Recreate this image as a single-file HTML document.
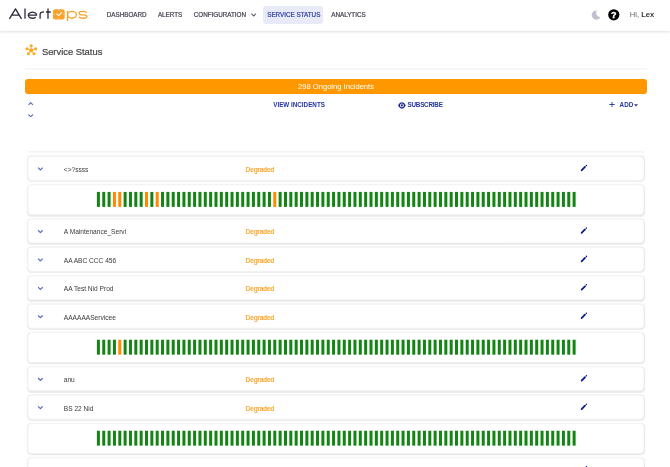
<!DOCTYPE html>
<html><head><meta charset="utf-8">
<style>
*{box-sizing:border-box;margin:0;padding:0}
html,body{width:670px;height:467px;overflow:hidden;background:#fff;font-family:"Liberation Sans",sans-serif;position:relative}
.hdr{position:absolute;left:0;top:0;width:670px;height:31px;background:#fff;box-shadow:0 0.5px 2.5px rgba(0,0,0,.13);z-index:2}
.abs{position:absolute;white-space:nowrap}
.nav{font-size:6.3px;color:#404050;top:12px;line-height:6px;-webkit-text-stroke:0.2px currentColor}
.pill{position:absolute;left:263.1px;top:6.3px;width:60.4px;height:17.5px;background:#e8eaf8;border-radius:3px}
.title{font-size:9.4px;color:#444;-webkit-text-stroke:0.2px #444;left:41.9px;top:46.5px;line-height:10px}
.divider{position:absolute;left:0;top:0;transform:translate(25px,68.4px);width:622px;height:1.1px;background:#eeeeee}
.obar{position:absolute;left:25px;top:79px;width:622px;height:14.7px;background:#ff9800;border-radius:3px;color:#fff;font-size:7.6px;text-align:center;line-height:15px}
.act{font-size:6.3px;font-weight:bold;color:#2435a0;top:102px;line-height:6px}
.tline{position:absolute;left:0;top:0;transform:translate(28px,151.4px);width:615.5px;height:1px;background:#ececec}
.card{position:absolute;left:0;top:0;width:616.8px;border:1px solid #f3f3f3;border-radius:4.5px;box-shadow:0 0 1.6px rgba(0,0,0,.05),0 0.8px 1px rgba(0,0,0,.07);background:#fff}
.card i{position:absolute;top:6.6px;width:3px;height:15.3px}
.chev{position:absolute;left:9.2px;top:10.4px}
.name{position:absolute;left:35.4px;top:8.5px;font-size:6.6px;color:#3a3a3a;line-height:7px;white-space:nowrap}
.deg{position:absolute;left:217.2px;top:8.5px;font-size:6.5px;color:#f9a11f;-webkit-text-stroke:0.2px #f9a11f;line-height:7px}
.pen{position:absolute;left:551.9px;top:7.2px}
.wrap{position:absolute;left:0;top:0;width:670px;height:467px;will-change:transform}
</style></head><body><div class="wrap">
<div class="hdr">
  <svg class="abs" style="left:0;top:0" width="100" height="31" viewBox="0 0 100 31">
    <g fill="none" stroke="#2a2a3a" stroke-width="1.3" stroke-linejoin="round">
      <path d="M9.4 18.8 L15.5 8.9 L21.5 18.8 M12.2 15.1 H18.8"/>
      <path d="M25 8.4 V18.8"/>
      <path d="M28.25 15.2 H36.65 A4.2 3.05 0 1 0 35.67 17.16"/>
      <path d="M40.1 18.8 V14.6 Q40.1 11.95 44.1 11.95"/>
      <path d="M48 8.6 V18.8 M46 12 H50.8"/>
    </g>
    <rect x="52.9" y="9.3" width="11.8" height="10.1" rx="2.5" fill="#f8a22b"/>
    <g stroke="#fff" stroke-width="0.7" opacity="0.75"><path d="M58.8 9.7 V10.7 M58.8 18 V19 M53.3 14.35 H54.3 M63.3 14.35 H64.3"/></g>
    <path d="M56.5 13.8 L58.7 15.6 L62.1 12.2" fill="none" stroke="#fff" stroke-width="1.1"/>
    <g fill="none" stroke="#f8a22b" stroke-width="1.3">
      <path d="M67.55 11 V21.1"/>
      <ellipse cx="71.95" cy="14.85" rx="4.4" ry="3.4"/>
      <path d="M86.5 12.7 C86 11.7 84.6 11.45 83 11.45 C80.6 11.45 79.1 11.9 79.1 13.2 C79.1 14.5 80.6 14.85 83 14.85 C85.4 14.85 86.9 15.2 86.9 16.5 C86.9 17.8 85.4 18.25 83 18.25 C81 18.25 79.5 18 78.9 16.9"/>
    </g>
  </svg>
  <span class="abs nav" style="left:106.7px">DASHBOARD</span>
  <span class="abs nav" style="left:157.9px">ALERTS</span>
  <span class="abs nav" style="left:193.7px">CONFIGURATION</span>
  <svg class="abs" style="left:250.5px;top:12.8px" width="5.5" height="4" viewBox="0 0 5.5 4"><path d="M0.5 0.6 L2.75 3 L5 0.6" fill="none" stroke="#505060" stroke-width="1.05"/></svg>
  <div class="pill"></div>
  <span class="abs nav" style="left:267.2px;color:#303f9f">SERVICE STATUS</span>
  <span class="abs nav" style="left:331.2px">ANALYTICS</span>
  <svg class="abs" style="left:591px;top:9.5px" width="10.5" height="10.5" viewBox="0 0 10.5 10.5"><defs><mask id="mm"><rect width="11" height="11" fill="#fff"/><circle cx="9.3" cy="2.9" r="4.2" fill="#000"/></mask></defs><circle cx="5.3" cy="5.05" r="4.6" fill="#c0c0d2" mask="url(#mm)"/></svg>
  <svg class="abs" style="left:608.3px;top:9.3px" width="11.6" height="11.6" viewBox="0 0 12 12"><circle cx="6" cy="6" r="5.8" fill="#000"/><text x="6" y="9.5" text-anchor="middle" font-family="Liberation Sans" font-weight="bold" font-size="9.4" fill="#fff" stroke="#fff" stroke-width="0.35">?</text></svg>
  <span class="abs" style="left:629.8px;top:10.6px;font-size:7.6px;color:#666;line-height:8px">Hi, <b style="color:#3a3a3a">Lex</b></span>
</div>
<svg class="abs" style="left:24.5px;top:44px" width="13" height="13" viewBox="0 0 13 13">
  <g stroke="#ffa51e" stroke-width="0.9" fill="#ffa51e">
  <path d="M6.2 6.4 L6.2 1.6 M6.2 6.4 L2 4.7 M6.2 6.4 L10.7 4.7 M6.2 6.4 L3.3 9.8 M6.2 6.4 L9.1 9.8"/>
  <circle cx="6.2" cy="1.7" r="1.5" stroke="none"/><circle cx="2" cy="4.75" r="1.5" stroke="none"/><circle cx="10.7" cy="4.75" r="1.5" stroke="none"/><circle cx="3.4" cy="9.8" r="1.5" stroke="none"/><circle cx="9.0" cy="9.8" r="1.5" stroke="none"/><circle cx="6.2" cy="6.4" r="2.0" stroke="none"/>
  </g>
</svg>
<span class="abs title">Service Status</span>
<div class="divider"></div>
<div class="obar">298 Ongoing Incidents</div>
<svg class="abs" style="left:28.3px;top:101.8px" width="5.4" height="3.4" viewBox="0 0 5.4 3.4"><path d="M0.5 2.9 L2.7 0.6 L4.9 2.9" fill="none" stroke="#5c6bc0" stroke-width="1.1"/></svg>
<svg class="abs" style="left:28.3px;top:113.6px" width="5.4" height="3.4" viewBox="0 0 5.4 3.4"><path d="M0.5 0.5 L2.7 2.8 L4.9 0.5" fill="none" stroke="#5c6bc0" stroke-width="1.1"/></svg>
<span class="abs act" style="left:273.2px">VIEW INCIDENTS</span>
<svg class="abs" style="left:397.5px;top:101.6px" width="8" height="7" viewBox="0 0 8 7"><path d="M0.1 3.4 C1.5 0.9 2.7 0.3 3.9 0.3 C5.1 0.3 6.3 0.9 7.7 3.4 C6.3 5.9 5.1 6.5 3.9 6.5 C2.7 6.5 1.5 5.9 0.1 3.4 Z" fill="#1a2590"/><circle cx="3.9" cy="3.4" r="1.9" fill="#fff"/><circle cx="3.9" cy="3.4" r="1.05" fill="#1a2590"/></svg>
<span class="abs act" style="left:407.5px;letter-spacing:-0.22px">SUBSCRIBE</span>
<svg class="abs" style="left:609px;top:102px" width="6" height="5" viewBox="0 0 6 5"><path d="M0.3 2.5 H5.7 M3 0 V5" stroke="#283593" stroke-width="0.9"/></svg>
<span class="abs act" style="left:619.6px">ADD</span>
<svg class="abs" style="left:634px;top:103.5px" width="4" height="3" viewBox="0 0 4 3"><path d="M0 0.3 H4 L2 2.5 Z" fill="#283593"/></svg>
<div class="tline"></div>
<div class="card" style="transform:translate(27.4px,155.90px);height:25.40px">
<svg class="chev" width="6" height="4" viewBox="0 0 6 4"><path d="M0.7 0.8 L3 3.1 L5.3 0.8" fill="none" stroke="#5c6bc0" stroke-width="1.2"/></svg>
<span class="name">&lt;&gt;?ssss</span><span class="deg">Degraded</span>
<svg class="pen" width="8" height="8" viewBox="0 0 8 8"><path d="M1.2 6.4 L4.6 3" stroke="#0d1b8e" stroke-width="1.8" stroke-linecap="round"/><circle cx="6" cy="1.55" r="0.8" fill="#0d1b8e"/></svg>
</div>
<div class="card" style="transform:translate(27.4px,184.30px);height:31.17px"></div>
<svg class="abs" style="left:0;top:0;transform:translateY(191.70px)" width="670" height="16" viewBox="0 0 670 16"><rect x="96.90" y="0" width="3" height="15.2" fill="#148414"/><rect x="102.25" y="0" width="3" height="15.2" fill="#148414"/><rect x="107.59" y="0" width="3" height="15.2" fill="#148414"/><rect x="112.94" y="0" width="3" height="15.2" fill="#ff8a00"/><rect x="118.28" y="0" width="3" height="15.2" fill="#ff8a00"/><rect x="123.62" y="0" width="3" height="15.2" fill="#148414"/><rect x="128.97" y="0" width="3" height="15.2" fill="#148414"/><rect x="134.31" y="0" width="3" height="15.2" fill="#148414"/><rect x="139.66" y="0" width="3" height="15.2" fill="#148414"/><rect x="145.00" y="0" width="3" height="15.2" fill="#ff8a00"/><rect x="150.35" y="0" width="3" height="15.2" fill="#148414"/><rect x="155.69" y="0" width="3" height="15.2" fill="#ff8a00"/><rect x="161.04" y="0" width="3" height="15.2" fill="#148414"/><rect x="166.38" y="0" width="3" height="15.2" fill="#148414"/><rect x="171.73" y="0" width="3" height="15.2" fill="#148414"/><rect x="177.07" y="0" width="3" height="15.2" fill="#148414"/><rect x="182.42" y="0" width="3" height="15.2" fill="#148414"/><rect x="187.76" y="0" width="3" height="15.2" fill="#148414"/><rect x="193.11" y="0" width="3" height="15.2" fill="#148414"/><rect x="198.45" y="0" width="3" height="15.2" fill="#148414"/><rect x="203.80" y="0" width="3" height="15.2" fill="#148414"/><rect x="209.14" y="0" width="3" height="15.2" fill="#148414"/><rect x="214.49" y="0" width="3" height="15.2" fill="#148414"/><rect x="219.83" y="0" width="3" height="15.2" fill="#148414"/><rect x="225.18" y="0" width="3" height="15.2" fill="#148414"/><rect x="230.53" y="0" width="3" height="15.2" fill="#148414"/><rect x="235.87" y="0" width="3" height="15.2" fill="#148414"/><rect x="241.22" y="0" width="3" height="15.2" fill="#148414"/><rect x="246.56" y="0" width="3" height="15.2" fill="#148414"/><rect x="251.91" y="0" width="3" height="15.2" fill="#148414"/><rect x="257.25" y="0" width="3" height="15.2" fill="#148414"/><rect x="262.60" y="0" width="3" height="15.2" fill="#148414"/><rect x="267.94" y="0" width="3" height="15.2" fill="#148414"/><rect x="273.28" y="0" width="3" height="15.2" fill="#ff8a00"/><rect x="278.63" y="0" width="3" height="15.2" fill="#148414"/><rect x="283.98" y="0" width="3" height="15.2" fill="#148414"/><rect x="289.32" y="0" width="3" height="15.2" fill="#148414"/><rect x="294.66" y="0" width="3" height="15.2" fill="#148414"/><rect x="300.01" y="0" width="3" height="15.2" fill="#148414"/><rect x="305.36" y="0" width="3" height="15.2" fill="#148414"/><rect x="310.70" y="0" width="3" height="15.2" fill="#148414"/><rect x="316.04" y="0" width="3" height="15.2" fill="#148414"/><rect x="321.39" y="0" width="3" height="15.2" fill="#148414"/><rect x="326.74" y="0" width="3" height="15.2" fill="#148414"/><rect x="332.08" y="0" width="3" height="15.2" fill="#148414"/><rect x="337.42" y="0" width="3" height="15.2" fill="#148414"/><rect x="342.77" y="0" width="3" height="15.2" fill="#148414"/><rect x="348.12" y="0" width="3" height="15.2" fill="#148414"/><rect x="353.46" y="0" width="3" height="15.2" fill="#148414"/><rect x="358.80" y="0" width="3" height="15.2" fill="#148414"/><rect x="364.15" y="0" width="3" height="15.2" fill="#148414"/><rect x="369.50" y="0" width="3" height="15.2" fill="#148414"/><rect x="374.84" y="0" width="3" height="15.2" fill="#148414"/><rect x="380.18" y="0" width="3" height="15.2" fill="#148414"/><rect x="385.53" y="0" width="3" height="15.2" fill="#148414"/><rect x="390.88" y="0" width="3" height="15.2" fill="#148414"/><rect x="396.22" y="0" width="3" height="15.2" fill="#148414"/><rect x="401.56" y="0" width="3" height="15.2" fill="#148414"/><rect x="406.91" y="0" width="3" height="15.2" fill="#148414"/><rect x="412.25" y="0" width="3" height="15.2" fill="#148414"/><rect x="417.60" y="0" width="3" height="15.2" fill="#148414"/><rect x="422.94" y="0" width="3" height="15.2" fill="#148414"/><rect x="428.29" y="0" width="3" height="15.2" fill="#148414"/><rect x="433.63" y="0" width="3" height="15.2" fill="#148414"/><rect x="438.98" y="0" width="3" height="15.2" fill="#148414"/><rect x="444.33" y="0" width="3" height="15.2" fill="#148414"/><rect x="449.67" y="0" width="3" height="15.2" fill="#148414"/><rect x="455.01" y="0" width="3" height="15.2" fill="#148414"/><rect x="460.36" y="0" width="3" height="15.2" fill="#148414"/><rect x="465.71" y="0" width="3" height="15.2" fill="#148414"/><rect x="471.05" y="0" width="3" height="15.2" fill="#148414"/><rect x="476.39" y="0" width="3" height="15.2" fill="#148414"/><rect x="481.74" y="0" width="3" height="15.2" fill="#148414"/><rect x="487.09" y="0" width="3" height="15.2" fill="#148414"/><rect x="492.43" y="0" width="3" height="15.2" fill="#148414"/><rect x="497.77" y="0" width="3" height="15.2" fill="#148414"/><rect x="503.12" y="0" width="3" height="15.2" fill="#148414"/><rect x="508.47" y="0" width="3" height="15.2" fill="#148414"/><rect x="513.81" y="0" width="3" height="15.2" fill="#148414"/><rect x="519.15" y="0" width="3" height="15.2" fill="#148414"/><rect x="524.50" y="0" width="3" height="15.2" fill="#148414"/><rect x="529.85" y="0" width="3" height="15.2" fill="#148414"/><rect x="535.19" y="0" width="3" height="15.2" fill="#148414"/><rect x="540.53" y="0" width="3" height="15.2" fill="#148414"/><rect x="545.88" y="0" width="3" height="15.2" fill="#148414"/><rect x="551.23" y="0" width="3" height="15.2" fill="#148414"/><rect x="556.57" y="0" width="3" height="15.2" fill="#148414"/><rect x="561.91" y="0" width="3" height="15.2" fill="#148414"/><rect x="567.26" y="0" width="3" height="15.2" fill="#148414"/><rect x="572.61" y="0" width="3" height="15.2" fill="#148414"/></svg>
<div class="card" style="transform:translate(27.4px,218.47px);height:25.40px">
<svg class="chev" width="6" height="4" viewBox="0 0 6 4"><path d="M0.7 0.8 L3 3.1 L5.3 0.8" fill="none" stroke="#5c6bc0" stroke-width="1.2"/></svg>
<span class="name">A Maintenance_Servi</span><span class="deg">Degraded</span>
<svg class="pen" width="8" height="8" viewBox="0 0 8 8"><path d="M1.2 6.4 L4.6 3" stroke="#0d1b8e" stroke-width="1.8" stroke-linecap="round"/><circle cx="6" cy="1.55" r="0.8" fill="#0d1b8e"/></svg>
</div>
<div class="card" style="transform:translate(27.4px,246.87px);height:25.40px">
<svg class="chev" width="6" height="4" viewBox="0 0 6 4"><path d="M0.7 0.8 L3 3.1 L5.3 0.8" fill="none" stroke="#5c6bc0" stroke-width="1.2"/></svg>
<span class="name">AA ABC CCC 456</span><span class="deg">Degraded</span>
<svg class="pen" width="8" height="8" viewBox="0 0 8 8"><path d="M1.2 6.4 L4.6 3" stroke="#0d1b8e" stroke-width="1.8" stroke-linecap="round"/><circle cx="6" cy="1.55" r="0.8" fill="#0d1b8e"/></svg>
</div>
<div class="card" style="transform:translate(27.4px,275.27px);height:25.40px">
<svg class="chev" width="6" height="4" viewBox="0 0 6 4"><path d="M0.7 0.8 L3 3.1 L5.3 0.8" fill="none" stroke="#5c6bc0" stroke-width="1.2"/></svg>
<span class="name">AA Test Nid Prod</span><span class="deg">Degraded</span>
<svg class="pen" width="8" height="8" viewBox="0 0 8 8"><path d="M1.2 6.4 L4.6 3" stroke="#0d1b8e" stroke-width="1.8" stroke-linecap="round"/><circle cx="6" cy="1.55" r="0.8" fill="#0d1b8e"/></svg>
</div>
<div class="card" style="transform:translate(27.4px,303.67px);height:25.40px">
<svg class="chev" width="6" height="4" viewBox="0 0 6 4"><path d="M0.7 0.8 L3 3.1 L5.3 0.8" fill="none" stroke="#5c6bc0" stroke-width="1.2"/></svg>
<span class="name">AAAAAAServicee</span><span class="deg">Degraded</span>
<svg class="pen" width="8" height="8" viewBox="0 0 8 8"><path d="M1.2 6.4 L4.6 3" stroke="#0d1b8e" stroke-width="1.8" stroke-linecap="round"/><circle cx="6" cy="1.55" r="0.8" fill="#0d1b8e"/></svg>
</div>
<div class="card" style="transform:translate(27.4px,332.07px);height:31.17px"></div>
<svg class="abs" style="left:0;top:0;transform:translateY(339.47px)" width="670" height="16" viewBox="0 0 670 16"><rect x="96.90" y="0" width="3" height="15.2" fill="#148414"/><rect x="102.25" y="0" width="3" height="15.2" fill="#148414"/><rect x="107.59" y="0" width="3" height="15.2" fill="#148414"/><rect x="112.94" y="0" width="3" height="15.2" fill="#148414"/><rect x="118.28" y="0" width="3" height="15.2" fill="#ff8a00"/><rect x="123.62" y="0" width="3" height="15.2" fill="#148414"/><rect x="128.97" y="0" width="3" height="15.2" fill="#148414"/><rect x="134.31" y="0" width="3" height="15.2" fill="#148414"/><rect x="139.66" y="0" width="3" height="15.2" fill="#148414"/><rect x="145.00" y="0" width="3" height="15.2" fill="#148414"/><rect x="150.35" y="0" width="3" height="15.2" fill="#148414"/><rect x="155.69" y="0" width="3" height="15.2" fill="#148414"/><rect x="161.04" y="0" width="3" height="15.2" fill="#148414"/><rect x="166.38" y="0" width="3" height="15.2" fill="#148414"/><rect x="171.73" y="0" width="3" height="15.2" fill="#148414"/><rect x="177.07" y="0" width="3" height="15.2" fill="#148414"/><rect x="182.42" y="0" width="3" height="15.2" fill="#148414"/><rect x="187.76" y="0" width="3" height="15.2" fill="#148414"/><rect x="193.11" y="0" width="3" height="15.2" fill="#148414"/><rect x="198.45" y="0" width="3" height="15.2" fill="#148414"/><rect x="203.80" y="0" width="3" height="15.2" fill="#148414"/><rect x="209.14" y="0" width="3" height="15.2" fill="#148414"/><rect x="214.49" y="0" width="3" height="15.2" fill="#148414"/><rect x="219.83" y="0" width="3" height="15.2" fill="#148414"/><rect x="225.18" y="0" width="3" height="15.2" fill="#148414"/><rect x="230.53" y="0" width="3" height="15.2" fill="#148414"/><rect x="235.87" y="0" width="3" height="15.2" fill="#148414"/><rect x="241.22" y="0" width="3" height="15.2" fill="#148414"/><rect x="246.56" y="0" width="3" height="15.2" fill="#148414"/><rect x="251.91" y="0" width="3" height="15.2" fill="#148414"/><rect x="257.25" y="0" width="3" height="15.2" fill="#148414"/><rect x="262.60" y="0" width="3" height="15.2" fill="#148414"/><rect x="267.94" y="0" width="3" height="15.2" fill="#148414"/><rect x="273.28" y="0" width="3" height="15.2" fill="#148414"/><rect x="278.63" y="0" width="3" height="15.2" fill="#148414"/><rect x="283.98" y="0" width="3" height="15.2" fill="#148414"/><rect x="289.32" y="0" width="3" height="15.2" fill="#148414"/><rect x="294.66" y="0" width="3" height="15.2" fill="#148414"/><rect x="300.01" y="0" width="3" height="15.2" fill="#148414"/><rect x="305.36" y="0" width="3" height="15.2" fill="#148414"/><rect x="310.70" y="0" width="3" height="15.2" fill="#148414"/><rect x="316.04" y="0" width="3" height="15.2" fill="#148414"/><rect x="321.39" y="0" width="3" height="15.2" fill="#148414"/><rect x="326.74" y="0" width="3" height="15.2" fill="#148414"/><rect x="332.08" y="0" width="3" height="15.2" fill="#148414"/><rect x="337.42" y="0" width="3" height="15.2" fill="#148414"/><rect x="342.77" y="0" width="3" height="15.2" fill="#148414"/><rect x="348.12" y="0" width="3" height="15.2" fill="#148414"/><rect x="353.46" y="0" width="3" height="15.2" fill="#148414"/><rect x="358.80" y="0" width="3" height="15.2" fill="#148414"/><rect x="364.15" y="0" width="3" height="15.2" fill="#148414"/><rect x="369.50" y="0" width="3" height="15.2" fill="#148414"/><rect x="374.84" y="0" width="3" height="15.2" fill="#148414"/><rect x="380.18" y="0" width="3" height="15.2" fill="#148414"/><rect x="385.53" y="0" width="3" height="15.2" fill="#148414"/><rect x="390.88" y="0" width="3" height="15.2" fill="#148414"/><rect x="396.22" y="0" width="3" height="15.2" fill="#148414"/><rect x="401.56" y="0" width="3" height="15.2" fill="#148414"/><rect x="406.91" y="0" width="3" height="15.2" fill="#148414"/><rect x="412.25" y="0" width="3" height="15.2" fill="#148414"/><rect x="417.60" y="0" width="3" height="15.2" fill="#148414"/><rect x="422.94" y="0" width="3" height="15.2" fill="#148414"/><rect x="428.29" y="0" width="3" height="15.2" fill="#148414"/><rect x="433.63" y="0" width="3" height="15.2" fill="#148414"/><rect x="438.98" y="0" width="3" height="15.2" fill="#148414"/><rect x="444.33" y="0" width="3" height="15.2" fill="#148414"/><rect x="449.67" y="0" width="3" height="15.2" fill="#148414"/><rect x="455.01" y="0" width="3" height="15.2" fill="#148414"/><rect x="460.36" y="0" width="3" height="15.2" fill="#148414"/><rect x="465.71" y="0" width="3" height="15.2" fill="#148414"/><rect x="471.05" y="0" width="3" height="15.2" fill="#148414"/><rect x="476.39" y="0" width="3" height="15.2" fill="#148414"/><rect x="481.74" y="0" width="3" height="15.2" fill="#148414"/><rect x="487.09" y="0" width="3" height="15.2" fill="#148414"/><rect x="492.43" y="0" width="3" height="15.2" fill="#148414"/><rect x="497.77" y="0" width="3" height="15.2" fill="#148414"/><rect x="503.12" y="0" width="3" height="15.2" fill="#148414"/><rect x="508.47" y="0" width="3" height="15.2" fill="#148414"/><rect x="513.81" y="0" width="3" height="15.2" fill="#148414"/><rect x="519.15" y="0" width="3" height="15.2" fill="#148414"/><rect x="524.50" y="0" width="3" height="15.2" fill="#148414"/><rect x="529.85" y="0" width="3" height="15.2" fill="#148414"/><rect x="535.19" y="0" width="3" height="15.2" fill="#148414"/><rect x="540.53" y="0" width="3" height="15.2" fill="#148414"/><rect x="545.88" y="0" width="3" height="15.2" fill="#148414"/><rect x="551.23" y="0" width="3" height="15.2" fill="#148414"/><rect x="556.57" y="0" width="3" height="15.2" fill="#148414"/><rect x="561.91" y="0" width="3" height="15.2" fill="#148414"/><rect x="567.26" y="0" width="3" height="15.2" fill="#148414"/><rect x="572.61" y="0" width="3" height="15.2" fill="#148414"/></svg>
<div class="card" style="transform:translate(27.4px,366.24px);height:25.40px">
<svg class="chev" width="6" height="4" viewBox="0 0 6 4"><path d="M0.7 0.8 L3 3.1 L5.3 0.8" fill="none" stroke="#5c6bc0" stroke-width="1.2"/></svg>
<span class="name">anu</span><span class="deg">Degraded</span>
<svg class="pen" width="8" height="8" viewBox="0 0 8 8"><path d="M1.2 6.4 L4.6 3" stroke="#0d1b8e" stroke-width="1.8" stroke-linecap="round"/><circle cx="6" cy="1.55" r="0.8" fill="#0d1b8e"/></svg>
</div>
<div class="card" style="transform:translate(27.4px,394.64px);height:25.40px">
<svg class="chev" width="6" height="4" viewBox="0 0 6 4"><path d="M0.7 0.8 L3 3.1 L5.3 0.8" fill="none" stroke="#5c6bc0" stroke-width="1.2"/></svg>
<span class="name">BS 22 Nid</span><span class="deg">Degraded</span>
<svg class="pen" width="8" height="8" viewBox="0 0 8 8"><path d="M1.2 6.4 L4.6 3" stroke="#0d1b8e" stroke-width="1.8" stroke-linecap="round"/><circle cx="6" cy="1.55" r="0.8" fill="#0d1b8e"/></svg>
</div>
<div class="card" style="transform:translate(27.4px,423.04px);height:31.17px"></div>
<svg class="abs" style="left:0;top:0;transform:translateY(430.44px)" width="670" height="16" viewBox="0 0 670 16"><rect x="96.90" y="0" width="3" height="15.2" fill="#148414"/><rect x="102.25" y="0" width="3" height="15.2" fill="#148414"/><rect x="107.59" y="0" width="3" height="15.2" fill="#148414"/><rect x="112.94" y="0" width="3" height="15.2" fill="#148414"/><rect x="118.28" y="0" width="3" height="15.2" fill="#148414"/><rect x="123.62" y="0" width="3" height="15.2" fill="#148414"/><rect x="128.97" y="0" width="3" height="15.2" fill="#148414"/><rect x="134.31" y="0" width="3" height="15.2" fill="#148414"/><rect x="139.66" y="0" width="3" height="15.2" fill="#148414"/><rect x="145.00" y="0" width="3" height="15.2" fill="#148414"/><rect x="150.35" y="0" width="3" height="15.2" fill="#148414"/><rect x="155.69" y="0" width="3" height="15.2" fill="#148414"/><rect x="161.04" y="0" width="3" height="15.2" fill="#148414"/><rect x="166.38" y="0" width="3" height="15.2" fill="#148414"/><rect x="171.73" y="0" width="3" height="15.2" fill="#148414"/><rect x="177.07" y="0" width="3" height="15.2" fill="#148414"/><rect x="182.42" y="0" width="3" height="15.2" fill="#148414"/><rect x="187.76" y="0" width="3" height="15.2" fill="#148414"/><rect x="193.11" y="0" width="3" height="15.2" fill="#148414"/><rect x="198.45" y="0" width="3" height="15.2" fill="#148414"/><rect x="203.80" y="0" width="3" height="15.2" fill="#148414"/><rect x="209.14" y="0" width="3" height="15.2" fill="#148414"/><rect x="214.49" y="0" width="3" height="15.2" fill="#148414"/><rect x="219.83" y="0" width="3" height="15.2" fill="#148414"/><rect x="225.18" y="0" width="3" height="15.2" fill="#148414"/><rect x="230.53" y="0" width="3" height="15.2" fill="#148414"/><rect x="235.87" y="0" width="3" height="15.2" fill="#148414"/><rect x="241.22" y="0" width="3" height="15.2" fill="#148414"/><rect x="246.56" y="0" width="3" height="15.2" fill="#148414"/><rect x="251.91" y="0" width="3" height="15.2" fill="#148414"/><rect x="257.25" y="0" width="3" height="15.2" fill="#148414"/><rect x="262.60" y="0" width="3" height="15.2" fill="#148414"/><rect x="267.94" y="0" width="3" height="15.2" fill="#148414"/><rect x="273.28" y="0" width="3" height="15.2" fill="#148414"/><rect x="278.63" y="0" width="3" height="15.2" fill="#148414"/><rect x="283.98" y="0" width="3" height="15.2" fill="#148414"/><rect x="289.32" y="0" width="3" height="15.2" fill="#148414"/><rect x="294.66" y="0" width="3" height="15.2" fill="#148414"/><rect x="300.01" y="0" width="3" height="15.2" fill="#148414"/><rect x="305.36" y="0" width="3" height="15.2" fill="#148414"/><rect x="310.70" y="0" width="3" height="15.2" fill="#148414"/><rect x="316.04" y="0" width="3" height="15.2" fill="#148414"/><rect x="321.39" y="0" width="3" height="15.2" fill="#148414"/><rect x="326.74" y="0" width="3" height="15.2" fill="#148414"/><rect x="332.08" y="0" width="3" height="15.2" fill="#148414"/><rect x="337.42" y="0" width="3" height="15.2" fill="#148414"/><rect x="342.77" y="0" width="3" height="15.2" fill="#148414"/><rect x="348.12" y="0" width="3" height="15.2" fill="#148414"/><rect x="353.46" y="0" width="3" height="15.2" fill="#148414"/><rect x="358.80" y="0" width="3" height="15.2" fill="#148414"/><rect x="364.15" y="0" width="3" height="15.2" fill="#148414"/><rect x="369.50" y="0" width="3" height="15.2" fill="#148414"/><rect x="374.84" y="0" width="3" height="15.2" fill="#148414"/><rect x="380.18" y="0" width="3" height="15.2" fill="#148414"/><rect x="385.53" y="0" width="3" height="15.2" fill="#148414"/><rect x="390.88" y="0" width="3" height="15.2" fill="#148414"/><rect x="396.22" y="0" width="3" height="15.2" fill="#148414"/><rect x="401.56" y="0" width="3" height="15.2" fill="#148414"/><rect x="406.91" y="0" width="3" height="15.2" fill="#148414"/><rect x="412.25" y="0" width="3" height="15.2" fill="#148414"/><rect x="417.60" y="0" width="3" height="15.2" fill="#148414"/><rect x="422.94" y="0" width="3" height="15.2" fill="#148414"/><rect x="428.29" y="0" width="3" height="15.2" fill="#148414"/><rect x="433.63" y="0" width="3" height="15.2" fill="#148414"/><rect x="438.98" y="0" width="3" height="15.2" fill="#148414"/><rect x="444.33" y="0" width="3" height="15.2" fill="#148414"/><rect x="449.67" y="0" width="3" height="15.2" fill="#148414"/><rect x="455.01" y="0" width="3" height="15.2" fill="#148414"/><rect x="460.36" y="0" width="3" height="15.2" fill="#148414"/><rect x="465.71" y="0" width="3" height="15.2" fill="#148414"/><rect x="471.05" y="0" width="3" height="15.2" fill="#148414"/><rect x="476.39" y="0" width="3" height="15.2" fill="#148414"/><rect x="481.74" y="0" width="3" height="15.2" fill="#148414"/><rect x="487.09" y="0" width="3" height="15.2" fill="#148414"/><rect x="492.43" y="0" width="3" height="15.2" fill="#148414"/><rect x="497.77" y="0" width="3" height="15.2" fill="#148414"/><rect x="503.12" y="0" width="3" height="15.2" fill="#148414"/><rect x="508.47" y="0" width="3" height="15.2" fill="#148414"/><rect x="513.81" y="0" width="3" height="15.2" fill="#148414"/><rect x="519.15" y="0" width="3" height="15.2" fill="#148414"/><rect x="524.50" y="0" width="3" height="15.2" fill="#148414"/><rect x="529.85" y="0" width="3" height="15.2" fill="#148414"/><rect x="535.19" y="0" width="3" height="15.2" fill="#148414"/><rect x="540.53" y="0" width="3" height="15.2" fill="#148414"/><rect x="545.88" y="0" width="3" height="15.2" fill="#148414"/><rect x="551.23" y="0" width="3" height="15.2" fill="#148414"/><rect x="556.57" y="0" width="3" height="15.2" fill="#148414"/><rect x="561.91" y="0" width="3" height="15.2" fill="#148414"/><rect x="567.26" y="0" width="3" height="15.2" fill="#148414"/><rect x="572.61" y="0" width="3" height="15.2" fill="#148414"/></svg>
<div class="card" style="transform:translate(27.4px,457.21px);height:25.40px">
<svg class="chev" width="6" height="4" viewBox="0 0 6 4"><path d="M0.7 0.8 L3 3.1 L5.3 0.8" fill="none" stroke="#5c6bc0" stroke-width="1.2"/></svg>
<span class="name">BS Test</span><span class="deg">Degraded</span>
<svg class="pen" width="8" height="8" viewBox="0 0 8 8"><path d="M1.2 6.4 L4.6 3" stroke="#0d1b8e" stroke-width="1.8" stroke-linecap="round"/><circle cx="6" cy="1.55" r="0.8" fill="#0d1b8e"/></svg>
</div>
</div></body></html>
